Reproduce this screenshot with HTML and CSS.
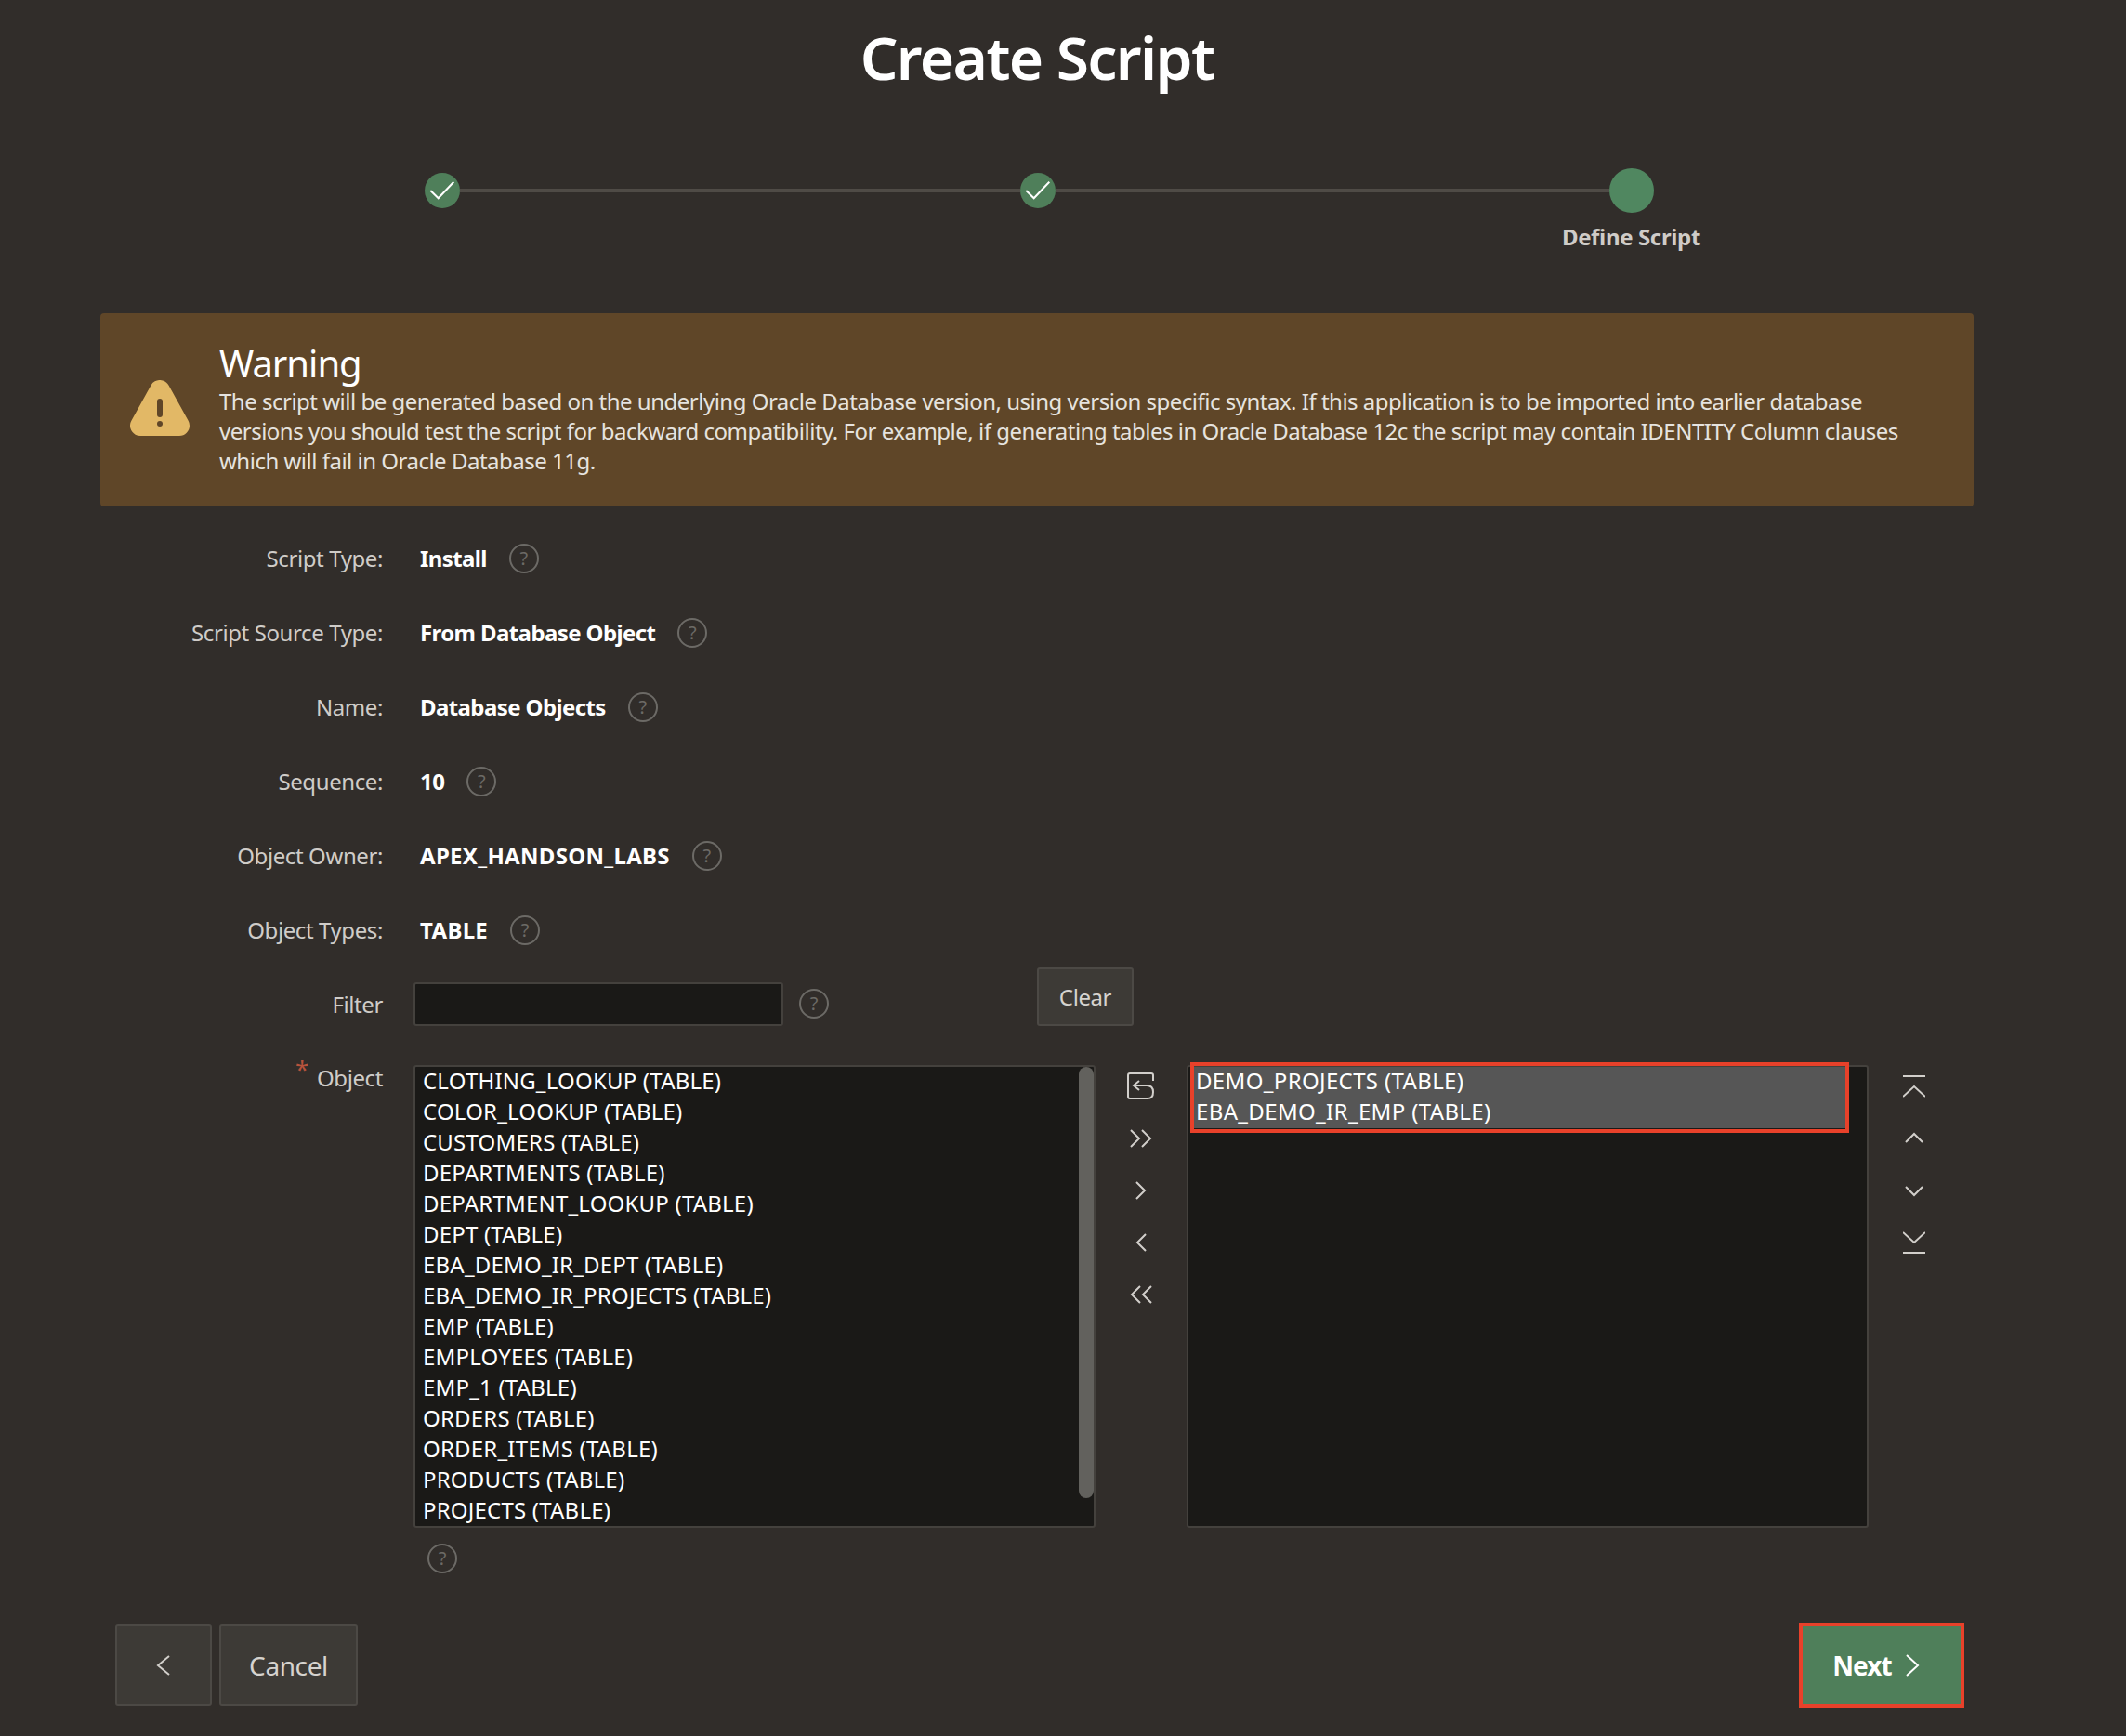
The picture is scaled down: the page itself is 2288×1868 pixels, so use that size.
FILE: index.html
```html
<!DOCTYPE html>
<html lang="en">
<head>
<meta charset="utf-8">
<title>Create Script</title>
<link rel="stylesheet" href="styles.css">
</head>
<body>
<h1 class="title">Create Script</h1>
<div class="wizard">
  <div class="steps">
    <span class="step"><svg viewBox="0 0 38 38" width="38" height="38"><path class="check" d="M6.300 19 L14.700 27.300 L31.300 9.700"/></svg></span>
    <span class="bar first"></span>
    <span class="step"><svg viewBox="0 0 38 38" width="38" height="38"><path class="check" d="M6.300 19 L14.700 27.300 L31.300 9.700"/></svg></span>
    <span class="bar"></span>
    <span class="step current"></span>
  </div>
  <div class="step-label"><span>Define Script</span></div>
</div>
<section class="banner">
  <svg class="warn-icon" viewBox="0 0 64 60" width="64" height="60"><polygon class="warn-tri" points="32,11 11,49 53,49"/><rect class="warn-mark" x="29" y="20" width="6" height="20" rx="3"/><circle class="warn-mark" cx="32" cy="47" r="3"/></svg>
  <div class="banner-body">
    <h2 class="banner-title">Warning</h2>
    <p class="banner-text">The script will be generated based on the underlying Oracle Database version, using version specific syntax. If this application is to be imported into earlier database versions you should test the script for backward compatibility. For example, if generating tables in Oracle Database 12c the script may contain IDENTITY Column clauses which will fail in Oracle Database 11g.</p>
  </div>
</section>
<form class="form">
  <div class="row"><span class="label">Script Type:</span><b class="value">Install</b><span class="help">?</span></div>
  <div class="row"><span class="label">Script Source Type:</span><b class="value">From Database Object</b><span class="help">?</span></div>
  <div class="row"><span class="label">Name:</span><b class="value">Database Objects</b><span class="help">?</span></div>
  <div class="row"><span class="label">Sequence:</span><b class="value">10</b><span class="help">?</span></div>
  <div class="row"><span class="label">Object Owner:</span><b class="value caps">APEX_HANDSON_LABS</b><span class="help">?</span></div>
  <div class="row"><span class="label">Object Types:</span><b class="value caps">TABLE</b><span class="help">?</span></div>
  <div class="row filter-row">
    <span class="label">Filter</span>
    <span class="input"></span>
    <span class="help">?</span>
    <span class="btn clear">Clear</span>
  </div>
  <div class="shuttle-row">
    <span class="label object-label"><span class="req">*</span>Object</span>
    <div class="shuttle-col">
      <div class="shuttle">
        <div class="list">
          <div class="opt">CLOTHING_LOOKUP (TABLE)</div>
          <div class="opt">COLOR_LOOKUP (TABLE)</div>
          <div class="opt">CUSTOMERS (TABLE)</div>
          <div class="opt">DEPARTMENTS (TABLE)</div>
          <div class="opt">DEPARTMENT_LOOKUP (TABLE)</div>
          <div class="opt">DEPT (TABLE)</div>
          <div class="opt">EBA_DEMO_IR_DEPT (TABLE)</div>
          <div class="opt">EBA_DEMO_IR_PROJECTS (TABLE)</div>
          <div class="opt">EMP (TABLE)</div>
          <div class="opt">EMPLOYEES (TABLE)</div>
          <div class="opt">EMP_1 (TABLE)</div>
          <div class="opt">ORDERS (TABLE)</div>
          <div class="opt">ORDER_ITEMS (TABLE)</div>
          <div class="opt">PRODUCTS (TABLE)</div>
          <div class="opt">PROJECTS (TABLE)</div>
          <span class="scroll"></span>
        </div>
        <div class="ctrls">
          <svg class="ic ic-reset" viewBox="0 0 30 30" width="30" height="30"><path d="M28 9 V3 Q28 1 26 1 H3 Q1 1 1 3 V26 Q1 28 3 28 H22 Q28 28 28 21 Q28 14 21 14 H7"/><path d="M13 9 L7 14 L13 19"/></svg>
          <svg class="ic" viewBox="0 0 26 20" width="26" height="20"><path d="M2 1 L11 10 L2 19 M14 1 L23 10 L14 19"/></svg>
          <svg class="ic" viewBox="0 0 26 20" width="26" height="20"><path d="M8 1 L17 10 L8 19"/></svg>
          <svg class="ic" viewBox="0 0 26 20" width="26" height="20"><path d="M18 1 L9 10 L18 19"/></svg>
          <svg class="ic" viewBox="0 0 26 20" width="26" height="20"><path d="M12 1 L3 10 L12 19 M24 1 L15 10 L24 19"/></svg>
        </div>
        <div class="list">
          <div class="selected">
            <div class="opt sel">DEMO_PROJECTS (TABLE)</div>
            <div class="opt sel">EBA_DEMO_IR_EMP (TABLE)</div>
          </div>
        </div>
        <div class="order">
          <svg class="ic" viewBox="0 0 24 34" width="24" height="34"><path d="M0 1 H24 M0 23 L12 12 L24 23"/></svg>
          <svg class="ic" viewBox="0 0 24 12" width="24" height="12"><path d="M3 11 L12 2 L21 11"/></svg>
          <svg class="ic" viewBox="0 0 24 12" width="24" height="12"><path d="M3 1 L12 10 L21 1"/></svg>
          <svg class="ic" viewBox="0 0 24 34" width="24" height="34"><path d="M0 11 L12 22 L24 11 M0 33 H24"/></svg>
        </div>
      </div>
      <span class="help help-bottom">?</span>
    </div>
  </div>
</form>
<footer class="footer">
  <div class="footer-left">
    <span class="btn back"><svg class="ic" viewBox="0 0 16 24" width="16" height="24"><path d="M14 2 L2 12 L14 22"/></svg></span>
    <span class="btn cancel">Cancel</span>
  </div>
  <span class="next"><b>Next</b><svg class="ic ic-next" viewBox="0 0 16 24" width="16" height="24"><path d="M2 1 L14 12 L2 23"/></svg></span>
</footer>
</body>
</html>
```
FILE: styles.css
```css
* { box-sizing: border-box; }
html, body { margin: 0; padding: 0; }
body {
  width: 2288px;
  height: 1868px;
  overflow: hidden;
  background: #312d2a;
  color: #d6d3cf;
  font-family: "Noto Sans", sans-serif;
  font-size: 24px;
  line-height: 32px;
  letter-spacing: -0.4px;
}
.title {
  margin: 0;
  padding: 23px 56px 0 0;
  height: 181px;
  text-align: center;
  color: #fff;
  font-size: 64px;
  line-height: 78px;
  font-weight: 600;
  letter-spacing: -1.6px;
}
.wizard { margin-left: 457px; width: 1323px; height: 156px; }
.steps { display: flex; align-items: center; height: 48px; }
.step { width: 38px; height: 38px; border-radius: 50%; background: #4f7f5a; flex: none; display: block; }
.step svg { display: block; }
.step.current { width: 48px; height: 48px; background: #508760; }
.check { fill: none; stroke: #fff; stroke-width: 2; }
.bar { flex: 1; height: 4px; background: #4f4b46; }
.bar.first { flex: none; width: 603px; }
.step-label { display: flex; justify-content: flex-end; margin-right: -50px; margin-top: 10px; font-weight: 700; color: #cfccc8; letter-spacing: -0.35px; }
.banner {
  margin-left: 108px;
  width: 2016px;
  height: 208px;
  background: #5f4628;
  border-radius: 4px;
  display: flex;
  align-items: center;
  padding-left: 32px;
}
.warn-icon { flex: none; margin: 0 32px 4px 0; }
.warn-tri { fill: #e2b866; stroke: #e2b866; stroke-width: 22; stroke-linejoin: round; }
.warn-mark { fill: #5f4628; }
.banner-body { width: 1825px; }
.banner-title { margin: 0; color: #fff; font-size: 40px; line-height: 48px; font-weight: 400; letter-spacing: -1px; }
.banner-text { margin: 1px 0 4px; color: #e6e3df; letter-spacing: -0.5px; }
.form { margin-top: 16px; }
.row { display: flex; align-items: center; height: 80px; }
.label { flex: none; width: 412px; margin-right: 1px; text-align: right; color: #cfccc8; }
.value { margin-left: 39px; color: #fff; font-weight: 700; letter-spacing: -0.6px; }
.value.caps { letter-spacing: 0.3px; }
.help {
  flex: none;
  width: 32px;
  height: 32px;
  margin-left: 24px;
  border: 2px solid #6c6a66;
  border-radius: 50%;
  color: #6c6a66;
  font-size: 20px;
  line-height: 28px;
  text-align: center;
  letter-spacing: 0;
}
.filter-row { align-items: flex-end; padding-bottom: 17px; }
.filter-row .label { line-height: 46px; }
.input { flex: none; width: 398px; height: 47px; margin-left: 32px; background: #1a1917; border: 2px solid #44413d; border-radius: 3px; }
.filter-row .help { margin: 0 0 8px 17px; }
.btn { display: flex; align-items: center; justify-content: center; background: #3d3a36; border: 2px solid #4c4945; border-radius: 3px; color: #d6d3cf; }
.clear { width: 104px; height: 63px; margin-left: 224px; }
.shuttle-row { display: flex; margin-top: 25px; }
.object-label { line-height: 28px; }
.req { color: #b8533c; font-size: 26px; line-height: 10px; position: relative; top: -9px; margin-right: 9px; }
.shuttle-col { margin-left: 32px; }
.shuttle { display: flex; height: 498px; }
.list { position: relative; width: 734px; background: #1a1917; border: 2px solid #44413d; border-radius: 3px; color: #fff; letter-spacing: 0.2px; }
.opt { height: 33px; line-height: 30px; padding-left: 8px; white-space: nowrap; }
.scroll { position: absolute; right: 0; top: 0; width: 16px; height: 464px; border-radius: 8px; background: #62615d; }
.ctrls { width: 98px; flex: none; display: flex; flex-direction: column; align-items: center; padding-top: 8px; }
.ic { display: block; flex: none; fill: none; stroke: #d2cfcb; stroke-width: 2; }
.ctrls .ic + .ic { margin-top: 36px; }
.ctrls .ic-reset + .ic { margin-top: 31px; }
.selected { margin: -5px 19px 0 2px; border: 4px solid #e8412a; padding: 1px 0; }
.opt.sel { background: #565656; padding-left: 2px; letter-spacing: 0.35px; }
.order { width: 98px; flex: none; display: flex; flex-direction: column; align-items: center; padding-top: 11px; }
.order .ic:nth-child(2) { margin-top: 27px; }
.order .ic:nth-child(3) { margin-top: 46px; }
.order .ic:nth-child(4) { margin-top: 27px; }
.help-bottom { display: block; margin: 17px 0 0 15px; }
.footer { display: flex; justify-content: space-between; align-items: center; margin-top: 53px; padding: 0 174px 0 124px; }
.footer-left { display: flex; gap: 8px; }
.back { width: 104px; height: 88px; }
.cancel { width: 149px; height: 88px; font-size: 28px; }
.next { width: 178px; height: 92px; border: 4px solid #e8412a; background: #4f7f5a; color: #fff; font-size: 28px; display: flex; align-items: center; justify-content: center; gap: 14px; padding-right: 12px; letter-spacing: -0.9px; }
.next b { font-weight: 700; }
.ic-next { stroke: #fff; }
```
